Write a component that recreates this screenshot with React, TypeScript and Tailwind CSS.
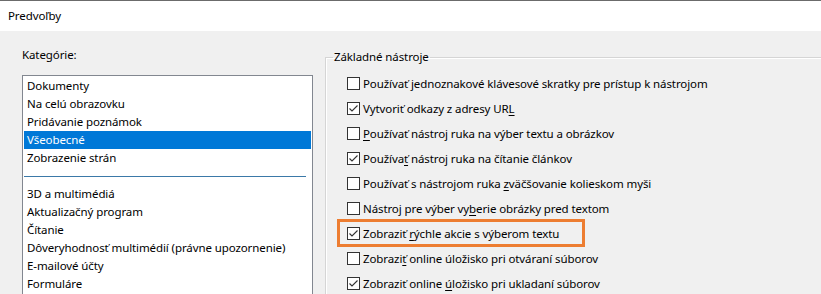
import { ReactNode } from 'react';

const categoriesTop = ['Dokumenty', 'Na celú obrazovku', 'Pridávanie poznámok', 'Všeobecné', 'Zobrazenie strán'];
const categoriesBottom = [
  '3D a multimédiá',
  'Aktualizačný program',
  'Čítanie',
  'Dôveryhodnosť multimédií (právne upozornenie)',
  'E-mailové účty',
  'Formuláre',
];

const u = (s: string) => <span className="underline underline-offset-[2px]">{s}</span>;

const options: { label: ReactNode; checked: boolean; highlight?: boolean }[] = [
  { label: <>Používať {u('j')}ednoznakové klávesové skratky pre prístup k nástrojom</>, checked: false },
  { label: <>Vytvoriť odkazy z adresy UR{u('L')}</>, checked: true },
  { label: <>{u('P')}oužívať nástroj ruka na výber textu a obrázkov</>, checked: false },
  { label: <>Používa{u('ť')} nástroj ruka na čítanie článkov</>, checked: true },
  { label: <>Používať s nástrojom ruka {u('z')}väčšovanie kolieskom myši</>, checked: false },
  { label: <>Nástroj pre výber vy{u('b')}erie obrázky pred textom</>, checked: false },
  { label: <>Zobraziť {u('r')}ýchle akcie s výberom textu</>, checked: true, highlight: true },
  { label: <>Zobrazi{u('ť')} online úložisko pri otváraní súborov</>, checked: false },
  { label: <>Zobraziť online {u('ú')}ložisko pri ukladaní súborov</>, checked: true },
];

function Checkbox({ checked }: { checked: boolean }) {
  return (
    <div className="w-[13px] h-[13px] border border-[#333] bg-white flex items-center justify-center shrink-0">
      {checked && (
        <svg width="11" height="11" viewBox="0 0 11 11">
          <polyline points="1.5,5.5 4,8 9.5,2.5" fill="none" stroke="#333" strokeWidth="1.1" />
        </svg>
      )}
    </div>
  );
}

export default function App() {
  return (
    <div className="w-[821px] h-[294px] overflow-hidden flex flex-col text-[11.5px] tracking-[-0.1px] leading-[16px] text-black font-['Noto_Sans',sans-serif]">
      <div className="h-[31px] bg-white border-t border-[#6b6b6b] flex items-center pl-[8px] shrink-0">
        Predvoľby
      </div>
      <div className="flex-1 bg-[#f0f0f0] flex items-start pl-[22px]">
        <div className="flex flex-col pt-[16px]">
          <div>Kategórie:</div>
          <div className="mt-[12px] w-[291px] h-[260px] border border-[#828790] bg-white p-[1px]">
            {categoriesTop.map((c, i) => (
              <div
                key={c}
                className={`h-[18px] flex items-center pl-[3px] ${i === 3 ? 'bg-[#0078d7] text-white' : ''}`}
              >
                {c}
              </div>
            ))}
            <div className="h-[18px] flex items-center pr-[5px]">
              <div className="h-px w-full bg-[#3b79a8]" />
            </div>
            {categoriesBottom.map(c => (
              <div key={c} className="h-[18px] flex items-center pl-[3px]">
                {c}
              </div>
            ))}
          </div>
        </div>
        <fieldset className="ml-[12px] mt-[18px] flex-1 h-[260px] border-t border-l border-[#d5d5d5] shadow-[inset_1px_1px_0_#ffffff]">
          <legend className="ml-[7px] px-[1px]">Základné nástroje</legend>
          <div className="pl-[21px] pt-[6px] flex flex-col">
            {options.map((o, i) => (
              <div key={i} className="relative h-[25px] flex items-center gap-[3px]">
                <Checkbox checked={o.checked} />
                <span className="whitespace-nowrap">{o.label}</span>
                {o.highlight && (
                  <div className="absolute left-[-10px] top-[-2px] w-[248px] h-[28px] border-[3px] border-[#ed7d31]" />
                )}
              </div>
            ))}
          </div>
        </fieldset>
      </div>
    </div>
  );
}
